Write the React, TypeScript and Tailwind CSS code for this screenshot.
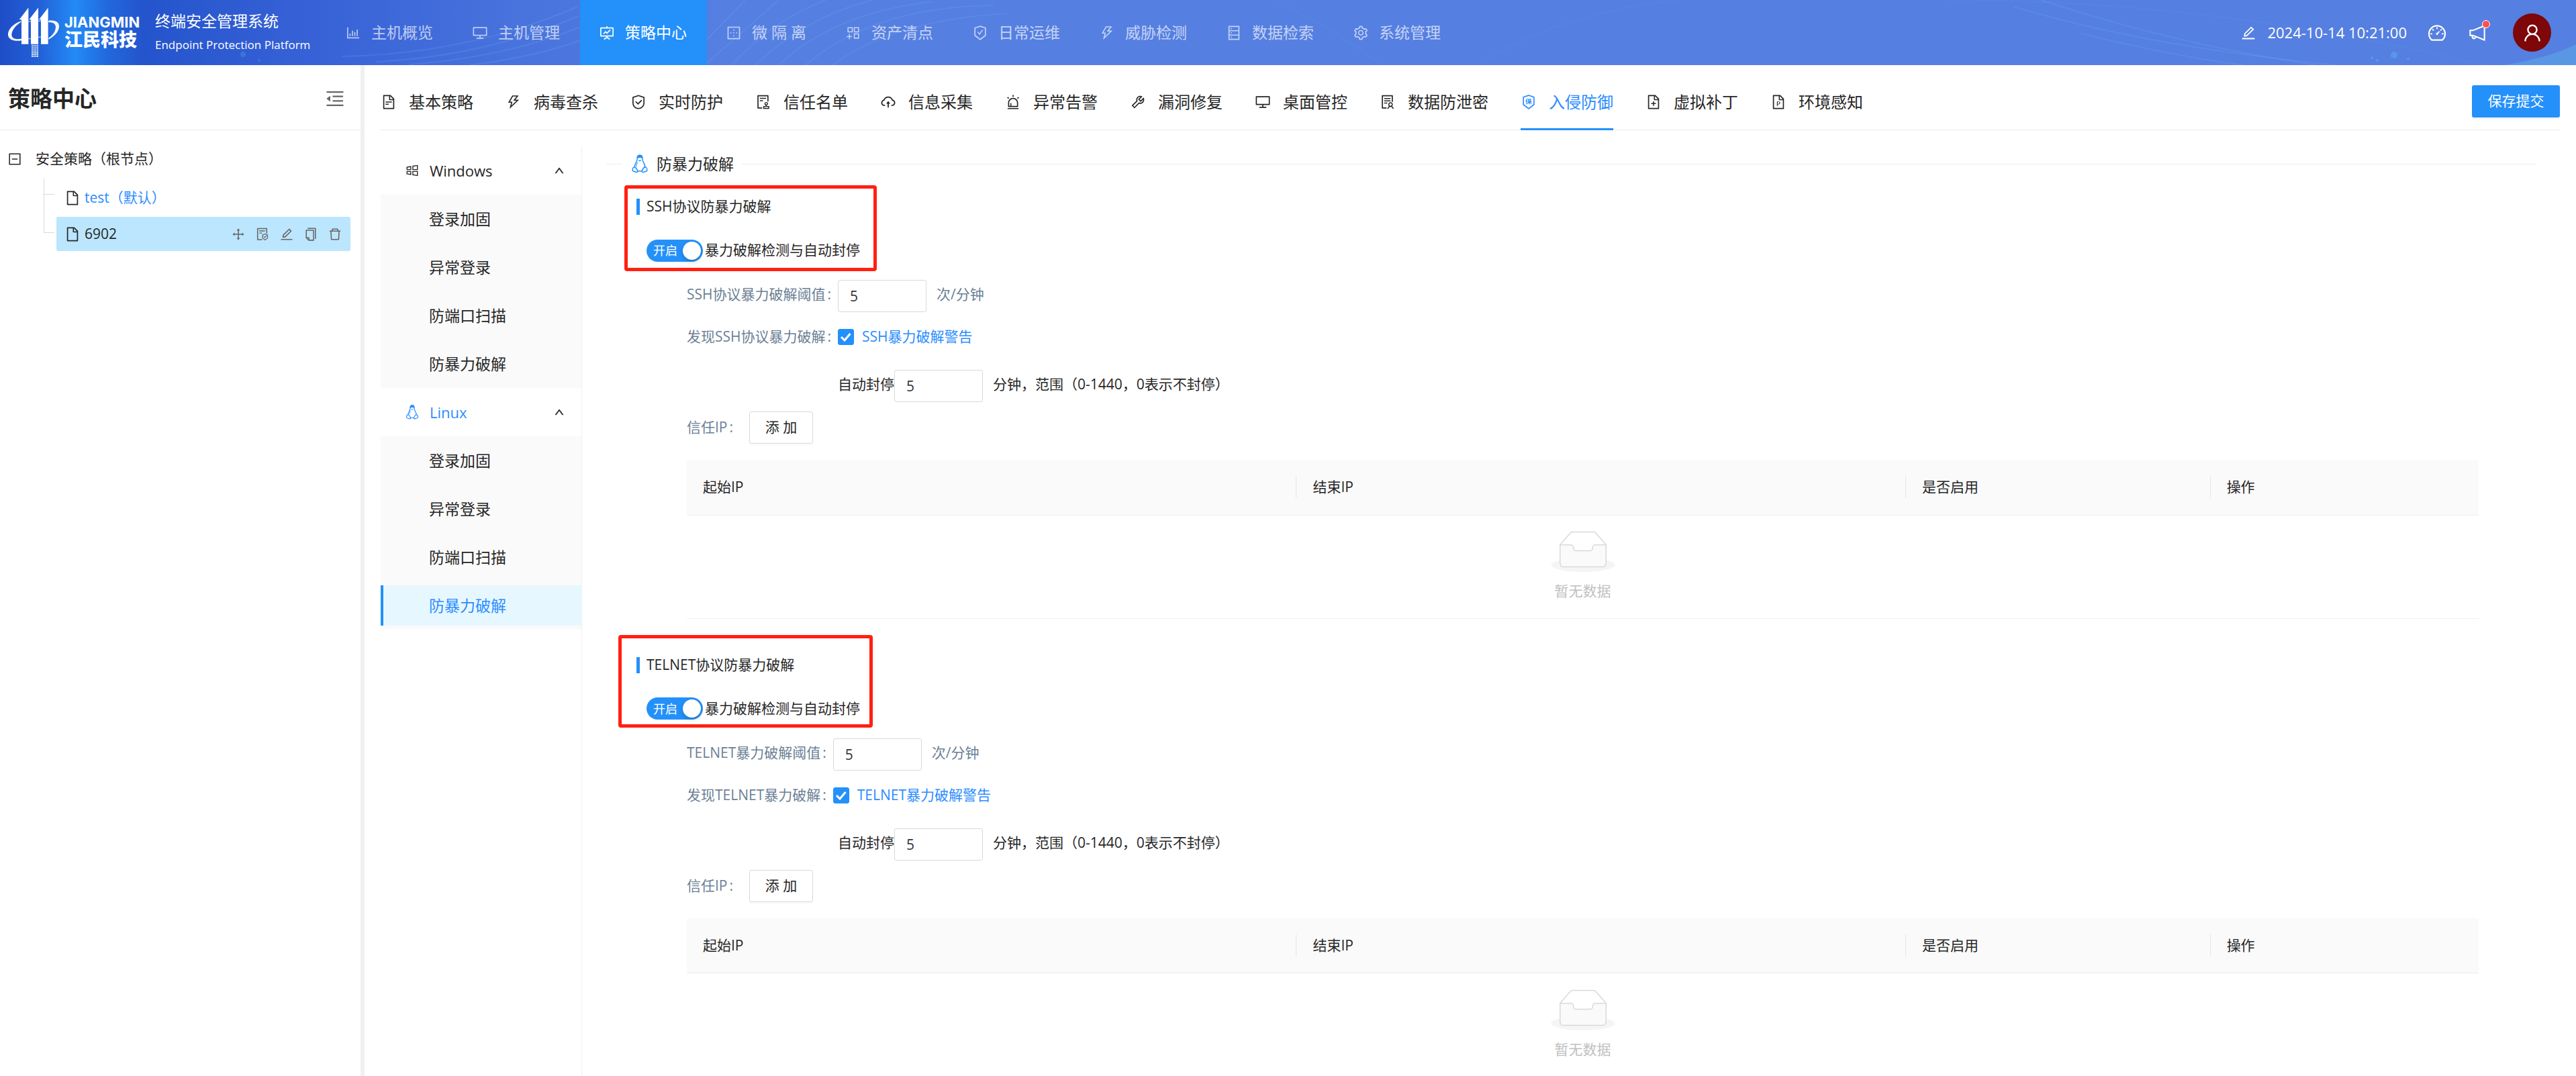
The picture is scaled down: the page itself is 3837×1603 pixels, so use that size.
import React from "react";
import type { IconType } from "react-icons";
import {
  AiOutlineAlert,
  AiOutlineAppstoreAdd,
  AiOutlineAudit,
  AiOutlineBarChart,
  AiOutlineBorderOuter,
  AiOutlineCloudUpload,
  AiOutlineCopy,
  AiOutlineDashboard,
  AiOutlineDatabase,
  AiOutlineDelete,
  AiOutlineDesktop,
  AiOutlineDrag,
  AiOutlineEdit,
  AiOutlineFile,
  AiOutlineFileAdd,
  AiOutlineFilePpt,
  AiOutlineFileProtect,
  AiOutlineFileText,
  AiOutlineFundProjectionScreen,
  AiOutlineInsurance,
  AiOutlineMenuFold,
  AiOutlineMinusSquare,
  AiOutlineNotification,
  AiOutlineSafety,
  AiOutlineSafetyCertificate,
  AiOutlineSetting,
  AiOutlineSolution,
  AiOutlineThunderbolt,
  AiOutlineTool,
  AiOutlineUp,
  AiOutlineUser,
  AiOutlineWindows,
} from "react-icons/ai";

type Entry = { label: string; Icon: IconType };

const mainNav: Entry[] = [
  { label: "主机概览", Icon: AiOutlineBarChart },
  { label: "主机管理", Icon: AiOutlineDesktop },
  { label: "策略中心", Icon: AiOutlineFundProjectionScreen },
  { label: "微 隔 离", Icon: AiOutlineBorderOuter },
  { label: "资产清点", Icon: AiOutlineAppstoreAdd },
  { label: "日常运维", Icon: AiOutlineSafetyCertificate },
  { label: "威胁检测", Icon: AiOutlineThunderbolt },
  { label: "数据检索", Icon: AiOutlineDatabase },
  { label: "系统管理", Icon: AiOutlineSetting },
];

const tabs: Entry[] = [
  { label: "基本策略", Icon: AiOutlineFileText },
  { label: "病毒查杀", Icon: AiOutlineThunderbolt },
  { label: "实时防护", Icon: AiOutlineSafety },
  { label: "信任名单", Icon: AiOutlineAudit },
  { label: "信息采集", Icon: AiOutlineCloudUpload },
  { label: "异常告警", Icon: AiOutlineAlert },
  { label: "漏洞修复", Icon: AiOutlineTool },
  { label: "桌面管控", Icon: AiOutlineDesktop },
  { label: "数据防泄密", Icon: AiOutlineSolution },
  { label: "入侵防御", Icon: AiOutlineInsurance },
  { label: "虚拟补丁", Icon: AiOutlineFileAdd },
  { label: "环境感知", Icon: AiOutlineFilePpt },
];

const menuItems = ["登录加固", "异常登录", "防端口扫描", "防暴力破解"];

const rowActions: Entry[] = [
  { label: "移动", Icon: AiOutlineDrag },
  { label: "权限", Icon: AiOutlineFileProtect },
  { label: "编辑", Icon: AiOutlineEdit },
  { label: "复制", Icon: AiOutlineCopy },
  { label: "删除", Icon: AiOutlineDelete },
];

function Penguin({ className }: { className?: string }) {
  return (
    <svg viewBox="0 0 24 28" className={className} fill="none" stroke="currentColor" strokeWidth="1.500" strokeLinejoin="round" aria-hidden="true">
      <path d="M12 1.2c-2.600 0-3.900 1.900-3.800 4.400.1 3.200-.2 4.300-1.900 6.900C4.800 14.900 4 17 4.200 19.400" />
      <path d="M12 1.200c2.600 0 3.900 1.900 3.800 4.400-.1 3.200.3 4.300 2 6.900 1.500 2.400 2.200 4.600 1.800 7" />
      <path d="M8.300 5.500c.2-3 1.600-4.300 3.700-4.300s3.500 1.300 3.700 4.300l-1.500-1H9.800z" fill="currentColor" />
      <path d="M10 8.400l2 1.400 2-1.400" strokeWidth="1.200" />
      <path d="M4.200 18.800c1.500.6 3.600 3.300 4.500 5.400.6 1.600-.6 2.700-2.300 2.300-1.700-.5-3.100-1.200-4.600-1.700-1-.4-.6-1.500-.5-2.300.1-1.700 1.200-3.800 2.900-3.700z" />
      <path d="M19.700 18.800c-1.500.6-3.500 3.300-4.300 5.400-.6 1.600.6 2.700 2.200 2.300 1.700-.5 3.100-1.200 4.600-1.700 1-.4.6-1.500.5-2.300-.1-1.700-1.300-3.800-3-3.700z" />
      <path d="M8.800 24.800h6.400" />
      <path d="M9 11.500c-1.400 2.200-2.200 4.200-1.900 6.800" strokeWidth="1" />
    </svg>
  );
}

function LogoMark() {
  return (
    <svg viewBox="30 26 240 230" className="h-[77px] w-20 shrink-0" fill="white" aria-hidden="true">
      <path d="M127 30V193H96V83H86z" />
      <path d="M171 30V193H138V83H130z" />
      <path d="M215 30V193H183V83H174z" />
      <path d="M94 90C60 100 34 128 36 152c2 22 32 30 60 24v-7c-22 4-43 0-44-17-1-18 18-44 42-58z" />
      <path d="M217 88c30-5 48 6 47 26-1 24-22 44-47 58v-6c17-12 32-30 32-50 0-15-12-22-32-21z" />
      <path d="M127 90h11v3h-11zM171 88h12v3h-12zM127 167h11v3h-11zM171 160h12v3h-12z" opacity=".8" />
      {[196, 204, 212, 220, 228, 236, 244].map((y) => (
        <g key={y} opacity={y > 225 ? 0.9 : 0.75}>
          <rect x="141" y={y} width="6" height="6" />
          <rect x="149" y={y} width="6" height="6" />
          <rect x="157" y={y} width="6" height="6" />
          <rect x="165" y={y} width="6" height="6" />
        </g>
      ))}
    </svg>
  );
}

function HeaderBackdrop() {
  return (
    <svg className="pointer-events-none absolute inset-0 h-full w-full" viewBox="0 0 3837 97" preserveAspectRatio="none" fill="none" aria-hidden="true">
      <g stroke="#6fb4f5" strokeOpacity=".2" strokeWidth="2">
        <path d="M510 84Q700 80 860 10" />
        <path d="M560 92Q720 84 862 24" />
        <path d="M610 96Q760 84 864 40" />
        <path d="M700 97Q800 84 864 60" />
        <path d="M1052 60L1110 0" />
        <path d="M1052 95L1160 0" />
        <path d="M1090 97Q1150 30 1230 0" />
        <path d="M1125 97Q1200 25 1300 0" />
        <path d="M1160 97Q1240 20 1390 2" />
        <path d="M1200 97Q1300 10 1480 8" />
        <path d="M1240 97Q1330 30 1500 20" />
        <path d="M1900 0Q1980 40 2060 97" strokeOpacity=".1" />
        <path d="M2200 97Q2320 20 2500 0" strokeOpacity=".1" />
        <path d="M3000 10Q3200 70 3480 97" />
        <path d="M3040 0Q3240 66 3450 97" />
        <path d="M3100 50Q3240 84 3340 97" />
        <path d="M2900 0Q3300 0 3700 97" strokeOpacity=".1" />
      </g>
      <g fill="#5cb6f5" fillOpacity=".45">
        <circle cx="3566" cy="82" r="5" />
        <circle cx="3533" cy="86" r="2" />
        <circle cx="3541" cy="90" r="2" />
        <circle cx="3587" cy="88" r="2" />
        <circle cx="362" cy="81" r="4" fillOpacity=".25" />
        <circle cx="386" cy="90" r="2" fillOpacity=".25" />
      </g>
      <path d="M3730 97Q3800 85 3837 66V97z" fill="#5a9ee6" fillOpacity=".8" />
    </svg>
  );
}

function Header() {
  return (
    <header className="relative flex h-[97px] shrink-0 items-center bg-[linear-gradient(90deg,#1f4dc8_0px,#2262d8_60px,#238af6_112px,#2268dd_160px,#2454cc_215px,#3560d6_430px,#4a74dd_800px,#557fe1_1080px,#557fe1_100%)] text-white">
      <HeaderBackdrop />
      <div className="relative flex w-[486px] shrink-0 items-center pl-2.5">
        <LogoMark />
        <div className="ml-1.5 w-[126px] whitespace-nowrap">
          <div className="font-[Inter] text-[22px] leading-5 font-bold">JIANGMIN</div>
          <div className="text-[27px] leading-8 font-black">江民科技</div>
        </div>
        <div className="ml-[9px] whitespace-nowrap">
          <div className="text-[23px] leading-9">终端安全管理系统</div>
          <div className="text-[17px] leading-9">Endpoint Protection Platform</div>
        </div>
      </div>
      <nav className="relative flex h-full">
        {mainNav.map(({ label, Icon }) => {
          const active = label === "策略中心";
          return (
            <a
              key={label}
              href="#"
              aria-current={active ? "page" : undefined}
              className={`flex h-full items-center gap-[15px] pr-[30px] pl-7 text-[23px] whitespace-pre ${active ? "bg-[#2490fa] text-white" : "text-white/65"}`}
            >
              <Icon className="size-6 shrink-0" />
              {label}
            </a>
          );
        })}
      </nav>
      <div className="relative ml-auto flex items-center pr-[37px]">
        <AiOutlineEdit className="size-6" />
        <time className="ml-4 text-[22px] whitespace-nowrap">2024-10-14 10:21:00</time>
        <button type="button" aria-label="仪表盘" className="ml-[30px]">
          <AiOutlineDashboard className="size-[30px]" />
        </button>
        <button type="button" aria-label="通知" className="relative ml-[30px]">
          <AiOutlineNotification className="size-[30px]" />
          <span className="absolute -top-1 -right-1 size-3 rounded-full border border-white bg-[#ff4d4f]" />
        </button>
        <button type="button" aria-label="用户" className="ml-[38px] grid size-[57px] place-items-center rounded-full bg-[#7d0709]">
          <AiOutlineUser className="size-8" />
        </button>
      </div>
    </header>
  );
}

function PolicyTree() {
  return (
    <aside className="w-[543px] shrink-0 border-r-[6px] border-[#f0f0f0]">
      <div className="flex h-[97px] items-center justify-between border-b border-[#ebebeb] pt-1 pr-[22px] pl-3">
        <h1 className="text-[33px] font-bold text-[#262626]">策略中心</h1>
        <button type="button" aria-label="收起" className="text-[#666]">
          <AiOutlineMenuFold className="size-8" />
        </button>
      </div>
      <div className="mt-3.5 pr-[15px] pl-[11px] text-[21px]">
        <div className="flex h-[58px] items-center gap-5">
          <button type="button" aria-label="折叠">
            <AiOutlineMinusSquare className="size-[22px]" />
          </button>
          安全策略（根节点）
        </div>
        <ul className="ml-[54px]">
          <li className="flex">
            <span className="mr-[3px] flex w-4 flex-col border-l border-[#d9d9d9]">
              <span className="h-6 border-b border-[#d9d9d9]" />
            </span>
            <a href="#" className="flex h-[57px] grow items-center gap-1.5 pl-3 text-[#2b8cff]">
              <AiOutlineFile className="size-6 text-[#262626]" />
              test（默认）
            </a>
          </li>
          <li className="flex">
            <span className="mr-[3px] h-6 w-4 border-b border-l border-[#d9d9d9]" />
            <div className="flex h-[51px] grow items-center gap-1.5 rounded-[3px] bg-[#bbe6fd] px-3">
              <AiOutlineFile className="size-6" />
              6902
              <span className="ml-auto flex gap-3.5 text-[#666]">
                {rowActions.map(({ label, Icon }) => (
                  <button key={label} type="button" aria-label={label}>
                    <Icon className="size-[22px]" />
                  </button>
                ))}
              </span>
            </div>
          </li>
        </ul>
      </div>
    </aside>
  );
}

function MenuGroup({ title, icon, active }: { title: string; icon: React.ReactNode; active?: boolean }) {
  return (
    <div>
      <button
        type="button"
        aria-expanded="true"
        className={`flex h-[72px] w-full items-center gap-[15px] pr-[25px] pl-9 text-[22px] ${active ? "text-[#2b8cff]" : ""}`}
      >
        {icon}
        {title}
        <AiOutlineUp className="ml-auto size-4 text-[#262626]" strokeWidth={40} />
      </button>
      <ul className="bg-[#fafafa]">
        {menuItems.map((item) => {
          const selected = active && item === "防暴力破解";
          return (
            <li key={item} className="py-1.5">
              <a
                href="#"
                className={`flex h-[60px] items-center border-l-4 pl-[68px] text-[23px] ${selected ? "border-[#2490fa] bg-[#e6f7ff] text-[#2b8cff]" : "border-transparent"}`}
              >
                {item}
              </a>
            </li>
          );
        })}
      </ul>
    </div>
  );
}

function EmptyTray() {
  return (
    <svg viewBox="0 0 64 41" className="mx-auto h-[61px] w-24" aria-hidden="true">
      <g transform="translate(0 1)" fill="none" fillRule="evenodd">
        <ellipse fill="#f5f5f5" cx="32" cy="33" rx="32" ry="7" />
        <g fillRule="nonzero" stroke="#d9d9d9">
          <path d="M55 12.760L44.854 1.258C44.367.474 43.656 0 42.907 0H21.093c-.749 0-1.460.474-1.947 1.257L9 12.761V22h46v-9.240z" />
          <path
            d="M41.613 15.931c0-1.605.994-2.930 2.227-2.931H55v18.137C55 33.260 53.680 35 52.050 35h-40.100C10.320 35 9 33.259 9 31.137V13h11.160c1.233 0 2.227 1.323 2.227 2.928v.022c0 1.605 1.005 2.901 2.237 2.901h14.752c1.232 0 2.237-1.308 2.237-2.913v-.007z"
            fill="#fafafa"
          />
        </g>
      </g>
    </svg>
  );
}

const columns = [
  { label: "起始IP", width: "w-[34%]" },
  { label: "结束IP", width: "w-[34%]" },
  { label: "是否启用", width: "w-[17%]" },
  { label: "操作", width: "w-[15%]" },
];

const fieldInput = "h-12 w-[132px] rounded-[3px] border border-[#d9d9d9] bg-white px-[17px] text-[21px] text-[#333]";

type SectionProps = {
  id: string;
  title: string;
  thresholdLabel: string;
  foundLabel: string;
  alertLabel: string;
  highlight: string;
};

function ProtocolSection({ id, title, thresholdLabel, foundLabel, alertLabel, highlight }: SectionProps) {
  return (
    <section className="pl-[45px] text-[21px]">
      <div className="relative w-fit">
        <span className={`pointer-events-none absolute rounded-[4px] border-[5px] border-[#ff2012] ${highlight}`} />
        <h3 className="flex h-9 items-center gap-2.5">
          <span className="h-6 w-[5px] bg-[#2490fa]" />
          {title}
        </h3>
        <div className="mt-[29px] flex h-9 items-center gap-[3px] pl-[15px]">
          <button
            type="button"
            role="switch"
            aria-checked="true"
            aria-labelledby={`${id}-switch`}
            className="flex h-[33px] w-[84px] items-center justify-between rounded-full bg-[#2490fa] pr-[3px] pl-2.5 text-lg text-white"
          >
            开启
            <span className="size-[27px] rounded-full bg-white shadow-[0_3px_6px_rgba(0,35,11,0.2)]" />
          </button>
          <span id={`${id}-switch`}>暴力破解检测与自动封停</span>
        </div>
      </div>
      <div className="pl-[75px]">
        <div className="mt-[26px] flex items-start leading-[42px] text-[#6b7f95]">
          <label htmlFor={`${id}-threshold`} className="mr-2.5">
            {thresholdLabel}<span className="ml-[3px]">:</span>
          </label>
          <input id={`${id}-threshold`} defaultValue="5" className={fieldInput} />
          <span className="ml-[15px]">次/分钟</span>
        </div>
        <div className="mt-[19px] flex h-9 items-center">
          <span className="mr-2.5 text-[#6b7f95]">
            {foundLabel}<span className="ml-[3px]">:</span>
          </span>
          <label className="relative flex items-center gap-3 text-[#2b8cff]">
            <input type="checkbox" defaultChecked className="peer size-6 appearance-none rounded-[3px] border border-[#d9d9d9] checked:border-[#2490fa] checked:bg-[#2490fa]" />
            <svg viewBox="0 0 24 24" className="pointer-events-none absolute left-0 hidden size-6 peer-checked:block" fill="none" stroke="white" strokeWidth="3" aria-hidden="true">
              <path d="M5 12l5 5 8.500-10" />
            </svg>
            {alertLabel}
          </label>
        </div>
        <div className="mt-[31px] flex items-start pl-[225px] leading-[42px]">
          <label htmlFor={`${id}-block`}>自动封停</label>
          <input id={`${id}-block`} defaultValue="5" className={fieldInput} />
          <span className="ml-[15px]">分钟，范围（0-1440，0表示不封停）</span>
        </div>
        <div className="mt-3.5 flex h-12 items-center">
          <span className="mr-6 text-[#6b7f95]">
            信任IP<span className="ml-[3px]">:</span>
          </span>
          <button type="button" className="h-12 w-[95px] rounded-[3px] border border-[#d9d9d9] bg-white shadow-[0_3px_0_rgba(0,0,0,0.015)]">
            添 加
          </button>
        </div>
        <div className="mt-6 pr-[85px]">
          <table className="w-full table-fixed border-collapse">
            <thead>
              <tr className="h-[82px] border-b border-[#ececec] bg-[#fafafa] text-left">
                {columns.map(({ label, width }, index) => (
                  <th key={label} scope="col" className={`p-0 font-normal ${width}`}>
                    <div className={`h-[33px] pl-6 leading-[33px] ${index > 0 ? "border-l border-[#e6e6e6]" : ""}`}>{label}</div>
                  </th>
                ))}
              </tr>
            </thead>
            <tbody>
              <tr className="h-[154px] border-b border-[#f0f0f0]">
                <td colSpan={4} className="p-0 text-center text-[#bfbfbf]">
                  <EmptyTray />
                  <div className="mt-3 leading-[33px]">暂无数据</div>
                </td>
              </tr>
            </tbody>
          </table>
        </div>
      </div>
    </section>
  );
}

export default function App() {
  return (
    <div className="flex h-screen flex-col overflow-hidden bg-white font-['Open_Sans','Noto_Sans_CJK_SC',sans-serif] text-[#262626]">
      <Header />
      <div className="flex min-h-0 grow">
        <PolicyTree />
        <main className="min-w-0 grow pr-6 pl-6">
          <div className="flex h-[97px] items-stretch border-b border-[#ebebeb]">
            <nav className="flex gap-12">
              {tabs.map(({ label, Icon }) => {
                const active = label === "入侵防御";
                return (
                  <a
                    key={label}
                    href="#"
                    aria-current={active ? "page" : undefined}
                    className={`-mb-px flex items-center gap-[18px] border-b-[3px] pt-4 text-2xl whitespace-nowrap ${active ? "border-[#2490fa] text-[#2b8cff]" : "border-transparent"}`}
                  >
                    <Icon className="size-6 shrink-0" />
                    {label}
                  </a>
                );
              })}
            </nav>
            <button type="button" className="mt-[30px] ml-auto h-12 w-[131px] rounded-[3px] bg-[#2490fa] text-[21px] text-white shadow-[0_3px_0_rgba(0,0,0,0.045)]">
              保存提交
            </button>
          </div>
          <div className="flex pt-6">
            <nav className="w-[300px] shrink-0 border-r border-[#f0f0f0]">
              <MenuGroup title="Windows" icon={<AiOutlineWindows className="size-[22px]" />} />
              <MenuGroup title="Linux" active icon={<Penguin className="size-[22px]" />} />
            </nav>
            <div className="min-w-0 grow px-9">
              <div className="flex h-[52px] items-center">
                <span className="h-px w-6 bg-[#ececec]" />
                <h2 className="flex items-center gap-[13px] pr-3 pl-3.5 text-[23px] whitespace-nowrap">
                  <Penguin className="h-7 w-6 text-[#2490fa]" />
                  防暴力破解
                </h2>
                <span className="h-px grow bg-[#ececec]" />
              </div>
              <div className="mt-5 flex flex-col gap-[51px]">
                <ProtocolSection
                  id="ssh"
                  title="SSH协议防暴力破解"
                  thresholdLabel="SSH协议暴力破解阈值"
                  foundLabel="发现SSH协议暴力破解"
                  alertLabel="SSH暴力破解警告"
                  highlight="-left-[18px] -top-[14px] h-[128px] w-[376px]"
                />
                <ProtocolSection
                  id="telnet"
                  title="TELNET协议防暴力破解"
                  thresholdLabel="TELNET暴力破解阈值"
                  foundLabel="发现TELNET暴力破解"
                  alertLabel="TELNET暴力破解警告"
                  highlight="-left-[27px] -top-[27px] h-[138px] w-[379px]"
                />
              </div>
            </div>
          </div>
        </main>
      </div>
    </div>
  );
}
